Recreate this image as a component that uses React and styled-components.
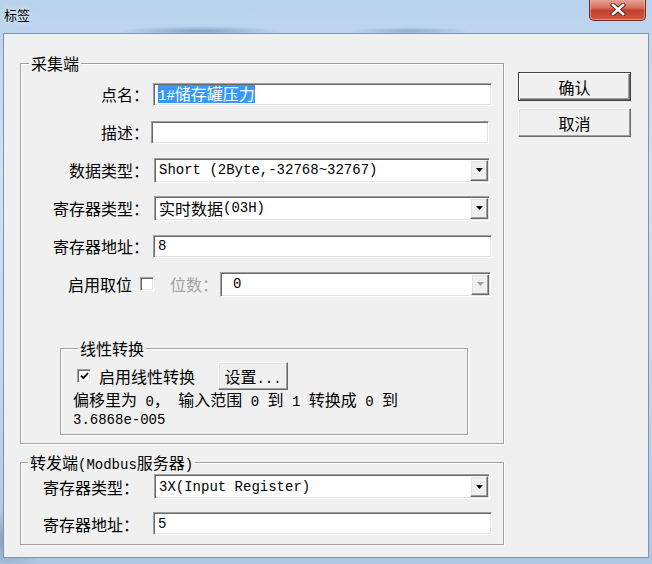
import React from 'react'
import styled, { createGlobalStyle, css } from 'styled-components'

const GlobalStyle = createGlobalStyle`
  html, body {
    margin: 0;
    padding: 0;
  }
  body {
    width: 652px;
    height: 564px;
    overflow: hidden;
    font-family: "Noto Sans CJK SC", sans-serif;
    font-size: 16px;
    color: #000;
  }
`

// classic 3D edges
const sunken = css`
  box-sizing: border-box;
  border: 1px solid;
  border-color: #a0a0a0 #fff #fff #a0a0a0;
  box-shadow: inset 1px 1px 0 #696969, inset -1px -1px 0 #e3e3e3;
  background: #fff;
`

const raised = css`
  box-sizing: border-box;
  border: 1px solid;
  border-color: #fff #696969 #696969 #fff;
  box-shadow: inset -1px -1px 0 #a0a0a0, inset 1px 1px 0 #e3e3e3;
  background: #f0f0f0;
`

const Mono = styled.span`
  font-family: "Liberation Mono", monospace;
  font-size: 14px;
  line-height: 1;
`

// SimSun style: ascii runs half width, CJK full width
const Txt = ({ s }) =>
  s.split(/([\x20-\x7e]+)/).filter(Boolean).map((part, i) =>
    /^[\x20-\x7e]+$/.test(part)
      ? <Mono key={i}>{part}</Mono>
      : <React.Fragment key={i}>{part}</React.Fragment>
  )

const Window = styled.div`
  width: 652px;
  height: 564px;
  box-sizing: border-box;
  display: flex;
  flex-direction: column;
  padding: 0 3px 6px 3px;
  background:
    radial-gradient(ellipse 80px 5px at 200px 31px, rgba(70, 100, 140, 0.45), transparent),
    radial-gradient(ellipse 60px 4px at 410px 31px, rgba(70, 100, 140, 0.35), transparent),
    radial-gradient(ellipse 40px 30px at 8px 540px, rgba(60, 80, 110, 0.35), transparent),
    linear-gradient(180deg, #b9d2ec 0%, #cfe2f5 30%, #c4daf0 60%, #adc6e2 100%);
`

const TitleBar = styled.div`
  height: 33px;
  display: flex;
  justify-content: space-between;
  align-items: flex-start;
`

const Caption = styled.div`
  padding: 6px 0 0 1px;
  font-size: 13px;
  line-height: 18px;
  color: #000;
  text-shadow: 0 0 6px rgba(255, 255, 255, 0.9);
`

const CloseButton = styled.div`
  width: 57px;
  height: 22px;
  margin: -1px 3px 0 0;
  box-sizing: border-box;
  border: 1px solid #6e2a22;
  border-top: none;
  border-radius: 0 0 5px 5px;
  background: linear-gradient(180deg, #e9a89a 0%, #d9705f 40%, #c2402e 55%, #cf5a44 100%);
  box-shadow: inset 0 0 0 1px rgba(255, 210, 200, 0.45);
  display: flex;
  align-items: center;
  justify-content: center;
`

const Client = styled.div`
  flex: 1;
  display: flex;
  align-items: flex-start;
  padding: 20px 16px 0 16px;
  background: #f0f0f0;
  border: 1px solid #7f93aa;
`

const MainColumn = styled.div`
  width: 484px;
  display: flex;
  flex-direction: column;
`

const Actions = styled.div`
  width: 113px;
  margin-left: 14px;
  padding-top: 18px;
  display: flex;
  flex-direction: column;
  gap: 7px;
`

const Group = styled.fieldset`
  box-sizing: border-box;
  min-width: 0;
  width: ${p => (p.$w ? `${p.$w}px` : 'auto')};
  margin: ${p => p.$margin || '0'};
  padding: ${p => p.$pad};
  border: 1px solid #a0a0a0;
  box-shadow: inset 1px 1px 0 #fff, 1px 1px 0 #fff;
`

const GroupTitle = styled.legend`
  margin-left: ${p => p.$offset}px;
  padding: 0 2px;
  height: 18px;
  line-height: 18px;
  background: #f0f0f0;
  white-space: pre;
`

const FieldList = styled.div`
  display: flex;
  flex-direction: column;
  gap: ${p => p.$gap}px;
`

const Row = styled.div`
  display: flex;
  align-items: center;
  height: ${p => p.$h || 24}px;
`

const FieldLabel = styled.label`
  flex: none;
  box-sizing: border-box;
  width: ${p => p.$w}px;
  margin-left: ${p => p.$ml || 0}px;
  padding-left: ${p => p.$pl || 0}px;
  text-align: ${p => p.$align || 'right'};
  line-height: 20px;
  white-space: pre;
  color: ${p => (p.$disabled ? '#a3a3a3' : '#000')};
`

const TextBox = styled.div`
  ${sunken};
  flex: none;
  width: ${p => p.$w}px;
  height: ${p => p.$h || 23}px;
  margin-left: ${p => p.$ml || 0}px;
  padding-left: 4px;
  display: flex;
  align-items: center;
  line-height: 17px;
  white-space: pre;
`

const Selected = styled.span`
  background: #3399ff;
  color: #fff;
`

const ComboFrame = styled.div`
  ${sunken};
  flex: none;
  width: ${p => p.$w}px;
  height: 25px;
  margin-left: ${p => p.$ml || 0}px;
  padding: 1px;
  display: flex;
`

const ComboValue = styled.div`
  flex: 1;
  padding-left: ${p => p.$pad}px;
  display: flex;
  align-items: center;
  line-height: 17px;
  white-space: pre;
`

const DropButton = styled.div`
  ${raised};
  width: 18px;
  display: flex;
  align-items: center;
  justify-content: center;
`

const ComboBox = ({ w, ml, pad = 3, disabled, children }) => (
  <ComboFrame $w={w} $ml={ml}>
    <ComboValue $pad={pad}>{children}</ComboValue>
    <DropButton>
      <svg width="7" height="4" viewBox="0 0 7 4">
        <path d="M0 0h7L3.5 4z" fill={disabled ? '#a0a0a0' : '#000'} />
      </svg>
    </DropButton>
  </ComboFrame>
)

const CheckBox = styled.span`
  ${sunken};
  flex: none;
  width: 14px;
  height: 14px;
  margin-left: ${p => p.$ml || 0}px;
  display: flex;
  align-items: center;
  justify-content: center;
`

const PushButton = styled.button`
  ${raised};
  width: ${p => p.$w}px;
  height: ${p => p.$h}px;
  margin-left: ${p => p.$ml || 0}px;
  padding: 0;
  font-family: "Noto Sans CJK SC", sans-serif;
  font-size: 16px;
  line-height: 18px;
  color: #000;
  ${p => p.$default && css`
    border: 1px solid #404040;
    box-shadow: inset 1px 1px 0 #fff, inset -1px -1px 0 #696969, inset -2px -2px 0 #a0a0a0;
  `}
`

const InlineText = styled.span`
  margin-left: ${p => p.$ml || 0}px;
  line-height: 20px;
  white-space: pre;
`

const Note = styled.div`
  height: 18px;
  line-height: 18px;
  white-space: pre;
`

export default function App() {
  return (
    <>
      <GlobalStyle />
      <Window>
        <TitleBar>
          <Caption>标签</Caption>
          <CloseButton aria-label="关闭">
            <svg width="16" height="13" viewBox="0 0 16 13">
              <path d="M3 2l10 9M13 2L3 11" stroke="#5a2620" strokeWidth="4.4" strokeLinecap="square" />
              <path d="M3 2l10 9M13 2L3 11" stroke="#fff" strokeWidth="2.6" strokeLinecap="square" />
            </svg>
          </CloseButton>
        </TitleBar>
        <Client>
          <MainColumn>
            <Group $pad="10px 0 8px 0">
              <GroupTitle $offset={8}>采集端</GroupTitle>
              <FieldList $gap={14}>
                <Row>
                  <FieldLabel $w={128}>点名：</FieldLabel>
                  <TextBox $ml={4} $w={339}>
                    <Selected><Txt s="1#储存罐压力" /></Selected>
                  </TextBox>
                </Row>
                <Row>
                  <FieldLabel $w={128}>描述：</FieldLabel>
                  <TextBox $ml={2} $w={338} />
                </Row>
                <Row>
                  <FieldLabel $w={128}>数据类型：</FieldLabel>
                  <ComboBox ml={5} w={336}><Txt s="Short (2Byte,-32768~32767)" /></ComboBox>
                </Row>
                <Row>
                  <FieldLabel $w={128}>寄存器类型：</FieldLabel>
                  <ComboBox ml={5} w={336}><Txt s="实时数据(03H)" /></ComboBox>
                </Row>
                <Row>
                  <FieldLabel $w={128}>寄存器地址：</FieldLabel>
                  <TextBox $ml={4} $w={339}><Txt s="8" /></TextBox>
                </Row>
                <Row>
                  <FieldLabel $w={111}>启用取位</FieldLabel>
                  <CheckBox $ml={8} />
                  <FieldLabel $w={50} $ml={16} $align="left" $disabled>位数：</FieldLabel>
                  <ComboBox w={271} pad={11} disabled><Txt s="0" /></ComboBox>
                </Row>
              </FieldList>
              <Group $w={408} $margin="43px 0 0 39px" $pad="5px 12px 8px 12px">
                <GroupTitle $offset={5}>线性转换</GroupTitle>
                <Row $h={28}>
                  <CheckBox $ml={4}>
                    <svg width="9" height="8" viewBox="0 0 9 8">
                      <path d="M1 3.6l2.4 2.6L8 1.2" fill="none" stroke="#000" strokeWidth="1.8" />
                    </svg>
                  </CheckBox>
                  <InlineText $ml={8}>启用线性转换</InlineText>
                  <PushButton $ml={23} $w={70} $h={28}><Txt s="设置..." /></PushButton>
                </Row>
                <Note><Txt s="偏移里为 0， 输入范围 0 到 1 转换成 0 到" /></Note>
                <Note><Txt s="3.6868e-005" /></Note>
              </Group>
            </Group>
            <Group $margin="9px 0 0 0" $pad="3px 0 9px 0">
              <GroupTitle $offset={7}><Txt s="转发端(Modbus服务器)" /></GroupTitle>
              <FieldList $gap={13}>
                <Row $h={25}>
                  <FieldLabel $w={133} $pl={22} $align="left">寄存器类型：</FieldLabel>
                  <ComboBox w={336}><Txt s="3X(Input Register)" /></ComboBox>
                </Row>
                <Row $h={23}>
                  <FieldLabel $w={132} $pl={22} $align="left">寄存器地址：</FieldLabel>
                  <TextBox $w={339}><Txt s="5" /></TextBox>
                </Row>
              </FieldList>
            </Group>
          </MainColumn>
          <Actions>
            <PushButton $default $w={113} $h={29}>确认</PushButton>
            <PushButton $w={113} $h={29}>取消</PushButton>
          </Actions>
        </Client>
      </Window>
    </>
  )
}
